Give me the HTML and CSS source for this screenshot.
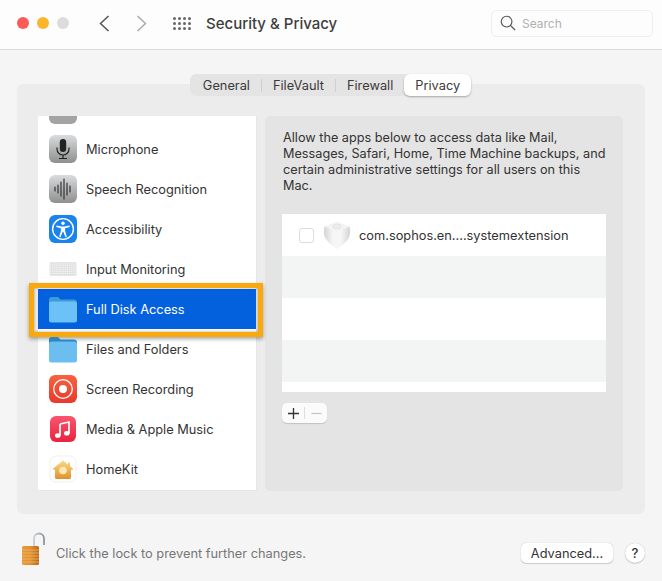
FILE: index.html
```html
<!DOCTYPE html>
<html lang="en">
<head>
    <meta charset="UTF-8">
    <meta name="viewport" content="width=device-width, initial-scale=1.0">
    <title>Security &amp; Privacy</title>
    <link rel="stylesheet" href="styles.css">
</head>
<body>
    <header class="titlebar">
        <div class="lights">
            <span class="light light-red"></span>
            <span class="light light-yellow"></span>
            <span class="light light-gray"></span>
        </div>
        <div class="nav-arrows">
            <svg width="11" height="17" viewBox="0 0 11 17"><path d="M9.5 1 L1.5 8.5 L9.5 16" fill="none" stroke="#555" stroke-width="1.5"/></svg>
            <svg width="11" height="17" viewBox="0 0 11 17"><path d="M1.5 1 L9.5 8.5 L1.5 16" fill="none" stroke="#aaa" stroke-width="1.5"/></svg>
        </div>
        <div class="grid-icon">
            <i></i><i></i><i></i><i></i>
            <i></i><i></i><i></i><i></i>
            <i></i><i></i><i></i><i></i>
        </div>
        <div class="window-title">Security &amp; Privacy</div>
        <div class="search">
            <svg width="16" height="16" viewBox="0 0 17 17"><circle cx="7" cy="7" r="5.7" fill="none" stroke="#555" stroke-width="1.2"/><path d="M11 11 L16 16" stroke="#555" stroke-width="1.4"/></svg>
            <span>Search</span>
        </div>
    </header>

    <main class="content">
        <section class="group">
            <div class="tabs">
                <span class="tab">General</span>
                <span class="tab-sep"></span>
                <span class="tab">FileVault</span>
                <span class="tab-sep"></span>
                <span class="tab">Firewall</span>
                <span class="tab tab-active">Privacy</span>
            </div>
            <div class="columns">
                <div class="perm-list">
                    <div class="perm-cut"><span class="cut-icon"></span></div>
                    <div class="perm-row">
                        <svg class="icon" viewBox="0 0 28 28">
                            <defs><linearGradient id="gray" x1="0" y1="0" x2="0" y2="1"><stop offset="0" stop-color="#d9dcdd"/><stop offset="1" stop-color="#8f8f8f"/></linearGradient></defs>
                            <rect width="28" height="28" rx="6" fill="url(#gray)"/>
                            <rect x="10.8" y="4" width="6.4" height="13" rx="3.2" fill="#222"/>
                            <path d="M8 12.5 V14 a6 6 0 0 0 12 0 V12.5 M14 20 V23 M10 23.5 H18" fill="none" stroke="#222" stroke-width="1.2"/>
                        </svg>
                        <span>Microphone</span>
                    </div>
                    <div class="perm-row">
                        <svg class="icon" viewBox="0 0 28 28">
                            <rect width="28" height="28" rx="6" fill="url(#gray)"/>
                            <path d="M6 12 V16 M9 10 V18 M12 7 V21 M15 4 V24 M18 8 V20 M21 11 V17" fill="none" stroke="#333" stroke-width="1.2" stroke-linecap="round"/>
                        </svg>
                        <span>Speech Recognition</span>
                    </div>
                    <div class="perm-row">
                        <svg class="icon" viewBox="0 0 28 28">
                            <rect width="28" height="28" rx="6" fill="#1a84ec"/>
                            <circle cx="14" cy="14" r="10.4" fill="none" stroke="#fff" stroke-width="1.4"/>
                            <circle cx="14" cy="8.2" r="1.7" fill="#fff"/>
                            <path d="M7.6 10.6 L7.2 11.9 L11.9 13.2 V16 L10.2 21.8 L11.5 22.2 L13.6 17 H14.4 L16.5 22.2 L17.8 21.8 L16.1 16 V13.2 L20.8 11.9 L20.4 10.6 L15.5 11.6 H12.5 Z" fill="#fff"/>
                        </svg>
                        <span>Accessibility</span>
                    </div>
                    <div class="perm-row">
                        <svg class="icon" viewBox="0 0 28 28">
                            <defs><pattern id="keys" width="1.9" height="1.9" patternUnits="userSpaceOnUse"><rect width="1.9" height="1.9" fill="#f4f4f4"/><rect width="1.3" height="1.3" fill="#d8d8d8"/></pattern></defs>
                            <rect x="0.5" y="7" width="27" height="14" rx="1" fill="#e2e2e2"/>
                            <rect x="1" y="7.5" width="26" height="13" fill="url(#keys)"/>
                        </svg>
                        <span>Input Monitoring</span>
                    </div>
                    <div class="perm-row perm-selected">
                        <svg class="icon" viewBox="0 0 28 28">
                            <path d="M0 4.5 a2.5 2.5 0 0 1 2.5 -2.5 H9 l2.5 2.5 H25 a3 3 0 0 1 3 3 V12 H0 Z" fill="#3f9ad8"/>
                            <rect y="6.5" width="28" height="21" rx="2.5" fill="#6cc1f6"/>
                        </svg>
                        <span>Full Disk Access</span>
                    </div>
                    <div class="perm-row">
                        <svg class="icon" viewBox="0 0 28 28">
                            <path d="M0 4.5 a2.5 2.5 0 0 1 2.5 -2.5 H9 l2.5 2.5 H25 a3 3 0 0 1 3 3 V12 H0 Z" fill="#2f85c4"/>
                            <rect y="6.5" width="28" height="21" rx="2.5" fill="#6cbdf0"/>
                        </svg>
                        <span>Files and Folders</span>
                    </div>
                    <div class="perm-row">
                        <svg class="icon" viewBox="0 0 28 28">
                            <defs><linearGradient id="rec" x1="0" y1="0" x2="0" y2="1"><stop offset="0" stop-color="#f8623f"/><stop offset="1" stop-color="#e8392c"/></linearGradient></defs>
                            <rect width="28" height="28" rx="6" fill="url(#rec)"/>
                            <circle cx="14" cy="14" r="9.3" fill="none" stroke="#fff" stroke-width="1.3"/>
                            <circle cx="14" cy="14" r="4" fill="#fff"/>
                        </svg>
                        <span>Screen Recording</span>
                    </div>
                    <div class="perm-row">
                        <svg class="icon" viewBox="0 0 28 28">
                            <defs><linearGradient id="music" x1="0" y1="0" x2="0" y2="1"><stop offset="0" stop-color="#f9566d"/><stop offset="1" stop-color="#e9233f"/></linearGradient></defs>
                            <rect x="1" y="1" width="26" height="26" rx="6" fill="url(#music)"/>
                            <path d="M11 9 L20 7 V18 M11 9 V20.5" fill="none" stroke="#fff" stroke-width="1.7"/>
                            <ellipse cx="8.8" cy="20.5" rx="2.8" ry="2.3" fill="#fff"/>
                            <ellipse cx="17.8" cy="18.2" rx="2.8" ry="2.3" fill="#fff"/>
                        </svg>
                        <span>Media &amp; Apple Music</span>
                    </div>
                    <div class="perm-row">
                        <svg class="icon" viewBox="0 0 28 28">
                            <defs><linearGradient id="home" x1="0" y1="0" x2="0" y2="1"><stop offset="0" stop-color="#f9d889"/><stop offset="1" stop-color="#e0912c"/></linearGradient></defs>
                            <rect x="1" y="1" width="26" height="26" rx="6" fill="#fff" stroke="#e8e8e8" stroke-width="0.7"/>
                            <path d="M14 5.5 L19 9.5 V7.5 H21 V11.2 L24.2 13.8 L23 15.3 L22 14.6 V22.5 a1.5 1.5 0 0 1 -1.5 1.5 H7.5 A1.5 1.5 0 0 1 6 22.5 V14.6 L5 15.3 L3.8 13.8 Z" fill="url(#home)"/>
                            <circle cx="14" cy="15.5" r="3.8" fill="#fde9b0"/>
                        </svg>
                        <span>HomeKit</span>
                    </div>
                </div>

                <div class="detail">
                    <p class="detail-text">Allow the apps below to access data like Mail, Messages, Safari, Home, Time Machine backups, and certain administrative settings for all users on this Mac.</p>
                    <div class="app-list">
                        <div class="app-row">
                            <span class="checkbox"></span>
                            <svg class="kext-icon" width="28" height="28" viewBox="0 0 28 28">
                                <defs><linearGradient id="kextSide" x1="0" y1="0" x2="1" y2="0"><stop offset="0" stop-color="#d4d4d4"/><stop offset="0.35" stop-color="#f6f6f6"/><stop offset="0.65" stop-color="#f6f6f6"/><stop offset="1" stop-color="#d4d4d4"/></linearGradient></defs>
                                <path d="M14 1 L26.5 5.5 C27.5 9 27.5 13 26 16.5 C23.5 21 19 25 14 28 C9 25 4.5 21 2 16.5 C.5 13 .5 9 1.5 5.5 Z" fill="url(#kextSide)"/>
                                <path d="M1.5 5.5 L14 1 L26.5 5.5 L14 11 Z" fill="#f4f4f4"/>
                                <ellipse cx="14" cy="5.5" rx="4.2" ry="2.4" fill="#ececec" stroke="#dcdcdc" stroke-width="0.6"/>
                            </svg>
                            <span>com.sophos.en....systemextension</span>
                        </div>
                        <div class="app-row app-row-alt"></div>
                        <div class="app-row"></div>
                        <div class="app-row app-row-alt"></div>
                    </div>
                    <div class="plus-minus">
                        <span class="pm-btn">
                            <svg width="13" height="13" viewBox="0 0 13 13"><path d="M6.5 1 V12 M1 6.5 H12" stroke="#333" stroke-width="1.3"/></svg>
                        </span>
                        <span class="pm-sep"></span>
                        <span class="pm-btn">
                            <svg width="13" height="13" viewBox="0 0 13 13"><path d="M1.5 6.5 H11.5" stroke="#c4c4c4" stroke-width="1.2"/></svg>
                        </span>
                    </div>
                </div>
            </div>
        </section>
    </main>

    <footer class="footer">
        <svg class="lock" width="24" height="33" viewBox="0 0 24 33">
            <defs>
                <linearGradient id="lockBody" x1="0" y1="0" x2="1" y2="0"><stop offset="0" stop-color="#e89a3c"/><stop offset="0.5" stop-color="#e0922f"/><stop offset="1" stop-color="#b56a1c"/></linearGradient>
                <linearGradient id="shackle" x1="0" y1="0" x2="1" y2="0"><stop offset="0" stop-color="#c9ced3"/><stop offset="1" stop-color="#8d969e"/></linearGradient>
            </defs>
            <path d="M13 15 V6.5 a5 5 0 0 1 10 0 V13" fill="none" stroke="url(#shackle)" stroke-width="1.8"/>
            <rect x="1" y="14" width="17" height="19" rx="1.5" fill="url(#lockBody)"/>
            <path d="M1 18 H18 M1 21 H18 M1 24 H18 M1 27 H18 M1 30 H18" stroke="#f3bb72" stroke-width="0.7"/>
        </svg>
        <span class="lock-text">Click the lock to prevent further changes.</span>
        <button class="advanced-btn">Advanced...</button>
        <button class="help-btn">?</button>
    </footer>
</body>
</html>
```

FILE: styles.css
```css
html, body {
    margin: 0;
    height: 100%;
}
body {
    width: 662px;
    height: 581px;
    overflow: hidden;
    display: flex;
    flex-direction: column;
    background: #f5f5f5;
    font-family: Inter, "Liberation Sans", sans-serif;
    font-size: 12.8px;
    color: #333;
}

/* title bar */
.titlebar {
    height: 46px;
    flex: none;
    display: flex;
    align-items: center;
    padding: 0 9px 3px 17px;
    background: #fdfdfd;
    border-bottom: 1px solid #dcdcdc;
}
.lights {
    display: flex;
    gap: 8px;
}
.light {
    width: 12px;
    height: 12px;
    border-radius: 50%;
}
.light-red { background: #fb5a57; }
.light-yellow { background: #fdb52c; }
.light-gray { background: #dcdcdc; }
.nav-arrows {
    display: flex;
    gap: 26px;
    margin-left: 30px;
}
.nav-arrows svg { display: block; }
.grid-icon {
    display: grid;
    grid-template-columns: repeat(4, 3px);
    grid-auto-rows: 3px;
    gap: 2px 2px;
    margin-left: 26px;
}
.grid-icon i {
    background: #666;
    border-radius: 50%;
}
.window-title {
    margin-left: 15px;
    font-size: 15px;
    font-weight: 500;
    color: #3d3d3d;
}
.search {
    margin-left: auto;
    width: 162px;
    height: 27px;
    box-sizing: border-box;
    padding-left: 8px;
    display: flex;
    align-items: center;
    gap: 6px;
    background: #fdfdfd;
    border: 1px solid #efefef;
    border-radius: 5px;
    color: #b0b0b0;
    font-size: 12px;
}

/* main group */
.content {
    flex: 1;
    padding: 24px 17px 0;
}
.group {
    height: 430px;
    box-sizing: border-box;
    margin-top: 10px;
    padding: 0 22px 23px 21px;
    background: #ececec;
    border-radius: 6px;
    display: flex;
    flex-direction: column;
}
.tabs {
    align-self: center;
    margin-top: -10px;
    margin-bottom: 20px;
    height: 22px;
    display: flex;
    align-items: center;
    background: #e4e4e4;
    border-radius: 6px;
    color: #3a3a3a;
}
.tab {
    padding: 0 11px;
}
.tabs .tab:first-child { padding-left: 13px; }
.tab-sep {
    width: 1px;
    height: 13px;
    background: #cfcfcf;
}
.tab-active {
    align-self: stretch;
    display: flex;
    align-items: center;
    background: #fff;
    border-radius: 6px;
    box-shadow: 0 1px 2px rgba(0,0,0,0.3);
}
.columns {
    flex: 1;
    min-height: 0;
    display: flex;
    gap: 8px;
}

/* left list */
.perm-list {
    width: 219px;
    box-sizing: border-box;
    flex: none;
    background: #fff;
    border: 1px solid #e6e6e6;
    border-width: 0 1px 1px 0;
}
.perm-cut {
    height: 13px;
    overflow: hidden;
    padding-left: 11px;
}
.cut-icon {
    display: block;
    width: 28px;
    height: 8px;
    background: #a3a3a3;
    border-radius: 0 0 6px 6px;
}
.perm-row {
    height: 40px;
    display: flex;
    align-items: center;
    gap: 9px;
    padding-left: 11px;
    position: relative;
    color: #333;
}
.icon {
    width: 28px;
    height: 28px;
    flex: none;
}
.perm-selected {
    background: #0461dd;
    color: #fff;
}
/* orange annotation around the selected row */
.perm-selected::after {
    content: "";
    position: absolute;
    left: -9px;
    right: -7px;
    top: -6px;
    bottom: -8px;
    border: 5px solid #f9a90d;
    box-shadow: 0 2px 4px rgba(0,0,0,0.35), inset 0 0 3px rgba(0,0,0,0.35);
}

/* right panel */
.detail {
    flex: 1;
    background: #e4e4e4;
    border-radius: 5px;
    padding: 14px 17px 0;
}
.detail-text {
    margin: 0 -2px 20px 1px;
    height: 64px;
    line-height: 16px;
    font-size: 12.7px;
    color: #333;
}
.app-list {
    height: 178px;
    background: #fff;
}
.app-row {
    height: 42px;
    display: flex;
    align-items: center;
    padding-left: 17px;
    color: #333;
}
.app-row-alt {
    background: #f3f4f4;
}
.checkbox {
    width: 13px;
    height: 13px;
    background: #fff;
    border: 1px solid #dcdcdc;
    border-radius: 3px;
}
.kext-icon {
    margin: 0 8px 0 9px;
}
.plus-minus {
    margin-top: 11px;
    width: 45px;
    height: 20px;
    display: flex;
    align-items: center;
    background: #fbfbfb;
    border-radius: 5px;
    box-shadow: 0 1px 1px rgba(0,0,0,0.15);
}
.pm-btn {
    flex: 1;
    display: flex;
    justify-content: center;
}
.pm-btn svg { display: block; }
.pm-sep {
    width: 1px;
    height: 12px;
    background: #ddd;
}

/* footer */
.footer {
    height: 67px;
    flex: none;
    box-sizing: border-box;
    display: flex;
    align-items: center;
    padding: 11px 17px 0 21px;
}
.lock {
    margin-bottom: 10px;
}
.lock-text {
    margin-left: 11px;
    color: #777;
}
.advanced-btn {
    margin-left: auto;
    width: 92px;
    height: 20px;
    padding: 0;
    background: #fff;
    border: none;
    border-radius: 5px;
    box-shadow: 0 0 1px rgba(0,0,0,0.3), 0 1px 1px rgba(0,0,0,0.15);
    font-family: inherit;
    font-size: 12.8px;
    color: #333;
}
.help-btn {
    margin-left: 12px;
    width: 20px;
    height: 20px;
    padding: 0;
    background: #fff;
    border: none;
    border-radius: 50%;
    box-shadow: 0 0 1px rgba(0,0,0,0.3), 0 1px 1px rgba(0,0,0,0.15);
    font-family: inherit;
    font-size: 13px;
    font-weight: 500;
    color: #333;
}
```
